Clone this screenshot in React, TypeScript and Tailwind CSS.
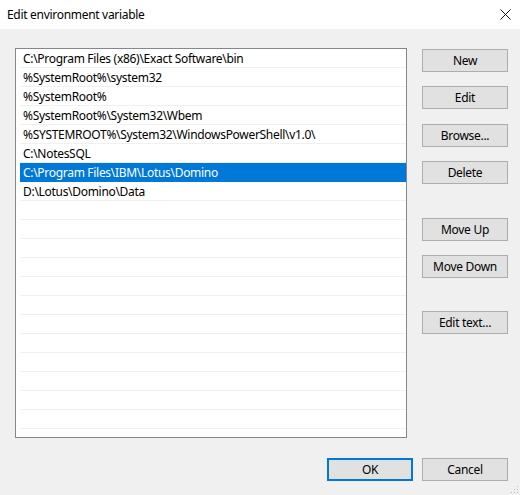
import React from "react";

const PATHS = [
  "C:\\Program Files (x86)\\Exact Software\\bin",
  "%SystemRoot%\\system32",
  "%SystemRoot%",
  "%SystemRoot%\\System32\\Wbem",
  "%SYSTEMROOT%\\System32\\WindowsPowerShell\\v1.0\\",
  "C:\\NotesSQL",
  "C:\\Program Files\\IBM\\Lotus\\Domino",
  "D:\\Lotus\\Domino\\Data",
];

const SELECTED = 6;
const TOTAL_ROWS = 21;

function DlgButton({ label, className = "", primary = false }: { label: string; className?: string; primary?: boolean }) {
  return (
    <button
      className={`w-[86px] h-[23px] flex items-center justify-center bg-[#e1e1e1] text-[12px] tracking-[-0.3px] text-black leading-none ${
        primary ? "border-2 border-[#0078d7]" : "border border-[#adadad]"
      } ${className}`}
    >
      {label}
    </button>
  );
}

export default function App() {
  const rows = Array.from({ length: TOTAL_ROWS }, (_, i) => PATHS[i] ?? "");

  return (
    <div
      className="w-[520px] h-[495px] bg-[#f0f0f0] flex flex-col relative overflow-hidden"
      style={{ fontFamily: '"Noto Sans", "Segoe UI", sans-serif' }}
    >
      {/* title bar */}
      <div className="h-[29px] bg-white flex items-center justify-between pl-[7px] pr-[8px]">
        <span className="text-[12px] tracking-[-0.3px] text-black">Edit environment variable</span>
        <svg width="11" height="11" viewBox="0 0 11 11" className="mr-[1px]">
          <path d="M0.5 0.5 L10.5 10.5 M10.5 0.5 L0.5 10.5" stroke="#111" strokeWidth="1" />
        </svg>
      </div>

      <div className="flex pt-[19px] pl-[15px]">
        {/* path list */}
        <div className="w-[392px] h-[390px] border border-[#828790] bg-white pl-[4px] overflow-hidden">
          {rows.map((p, i) => (
            <div
              key={i}
              className={`h-[19px] flex items-center pl-[3px] pt-[1px] text-[12px] tracking-[-0.3px] whitespace-nowrap border-b ${
                i === SELECTED ? "bg-[#0078d7] text-white border-[#0078d7]" : "text-black border-[#f0f0f0]"
              }`}
            >
              {p}
            </div>
          ))}
        </div>

        {/* side buttons */}
        <div className="ml-[15px] flex flex-col pt-[1px]">
          <DlgButton label="New" />
          <DlgButton label="Edit" className="mt-[14px]" />
          <DlgButton label="Browse..." className="mt-[15px]" />
          <DlgButton label="Delete" className="mt-[14px]" />
          <DlgButton label="Move Up" className="mt-[34px]" />
          <DlgButton label="Move Down" className="mt-[14px]" />
          <DlgButton label="Edit text..." className="mt-[33px]" />
        </div>
      </div>

      {/* footer */}
      <div className="flex justify-end gap-[9px] pr-[12px] mt-[20px]">
        <DlgButton label="OK" primary />
        <DlgButton label="Cancel" />
      </div>

      {/* size grip */}
      <svg width="8" height="8" viewBox="0 0 8 8" className="absolute right-[1px] bottom-[1px]">
        <rect x="6" y="0" width="1" height="1" fill="#bcbcbc" />
        <rect x="3" y="3" width="1" height="1" fill="#bcbcbc" />
        <rect x="6" y="3" width="1" height="1" fill="#bcbcbc" />
        <rect x="0" y="6" width="1" height="1" fill="#bcbcbc" />
        <rect x="3" y="6" width="1" height="1" fill="#bcbcbc" />
        <rect x="6" y="6" width="1" height="1" fill="#bcbcbc" />
      </svg>
    </div>
  );
}
